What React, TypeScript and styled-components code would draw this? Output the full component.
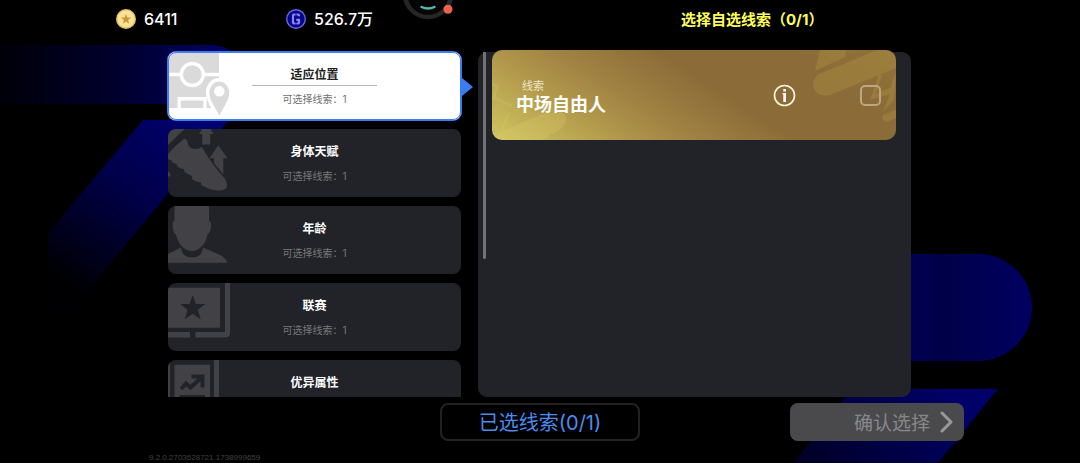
import React, { useState } from "react";
import styled, { createGlobalStyle, css } from "styled-components";

const GlobalStyle = createGlobalStyle`
  *, *::before, *::after { box-sizing: border-box; }
  body {
    margin: 0;
    background: #000;
    color: #fff;
    font-family: Inter, "Noto Sans CJK SC", sans-serif;
  }
  button { font: inherit; color: inherit; cursor: pointer; }
`;

const Page = styled.div`
  position: relative;
  display: flex;
  flex-direction: column;
  height: 100vh;
  padding: 0 116px;
  overflow: hidden;
  isolation: isolate;
`;

const Backdrop = styled.svg`
  position: absolute;
  inset: 0;
  z-index: -1;
  width: 100%;
  height: 100%;
`;

const Assistant = styled.svg`
  position: absolute;
  top: 0;
  left: 400px;
`;

const Header = styled.header`
  display: grid;
  grid-template-columns: 170fr 395fr 283fr;
  flex: none;
  height: 50px;
  padding-bottom: 12px;
  align-items: center;
`;

const Balance = styled.div`
  display: flex;
  align-items: center;
  gap: 8px;
  font-size: 16px;
  font-weight: 500;
  line-height: 20px;
`;

const PageTitle = styled.h1`
  margin: 2px 0 0;
  color: #ffff5a;
  font-size: 15px;
  font-weight: 700;
  line-height: 20px;
  white-space: nowrap;
`;

const Main = styled.main`
  display: grid;
  grid-template-columns: minmax(0, 306fr) minmax(0, 433fr);
  gap: 5px;
  flex: 1;
  min-height: 0;
  padding: 0 53px 0 51px;
`;

const CategoryList = styled.ul`
  display: flex;
  flex-direction: column;
  gap: 9px;
  margin: 0;
  padding: 2px 12px 0 1px;
  list-style: none;
  overflow-y: auto;
  scrollbar-width: none;
`;

const CategoryCard = styled.button<{ $active: boolean }>`
  position: relative;
  display: flex;
  flex-direction: column;
  align-items: center;
  width: 100%;
  height: 68px;
  padding: 14px 0 0;
  border: 0;
  border-radius: 8px;
  background: #222328;
  color: #fff;
  --icon: #424246;
  --card: #222328;

  ${(p) =>
    p.$active &&
    css`
      background: #fff;
      color: #222;
      box-shadow: 0 0 0 1px #3b7cf0;
      --icon: #dadada;
      --card: #fff;

      &::before {
        content: "";
        position: absolute;
        inset: 0;
        z-index: 1;
        border: 1px solid #3b7cf0;
        border-radius: 8px;
      }

      &::after {
        content: "";
        position: absolute;
        top: 26px;
        right: -12px;
        border-left: 11px solid #3b7cf0;
        border-top: 9px solid transparent;
        border-bottom: 9px solid transparent;
      }
    `}
`;

const CardArt = styled.svg`
  position: absolute;
  top: 0;
  left: 0;
  border-radius: 8px 0 0 8px;
`;

const CardName = styled.span`
  font-size: 12px;
  font-weight: 700;
  line-height: 18px;
`;

const CardRule = styled.span<{ $visible: boolean }>`
  width: 43%;
  height: 1px;
  margin: 1px 0 5px;
  background: ${(p) => (p.$visible ? "#b4b4b4" : "transparent")};
`;

const CardCount = styled.span<{ $active: boolean }>`
  color: ${(p) => (p.$active ? "#707070" : "#77787b")};
  font-size: 10px;
  line-height: 16px;
`;

const CluePanel = styled.section`
  display: flex;
  align-items: flex-start;
  gap: 6px;
  margin-top: 2px;
  padding: 0 15px 0 5px;
  border-radius: 9px;
  background: #222328;
`;

const ScrollThumb = styled.div`
  flex: none;
  width: 3px;
  height: 60%;
  border-radius: 0 0 2px 2px;
  background: #737376;
`;

const ClueCard = styled.div`
  position: relative;
  display: flex;
  flex: 1;
  align-items: center;
  height: 90px;
  margin-top: -2px;
  padding: 0 15px 0 24px;
  border-radius: 10px;
  overflow: hidden;
  isolation: isolate;
  background: linear-gradient(33deg, #d0c661 0%, #b0964a 25%, #a08343 37%, #8b6c38 56%, #8b6c38 80%, #92733a 100%);
`;

const ClueArt = styled.svg<{ $side: "left" | "right" }>`
  position: absolute;
  z-index: -1;
  top: 0;
  ${(p) => p.$side}: 0;
`;

const ClueText = styled.div`
  flex: 1;
  padding-top: 5px;
`;

const ClueKind = styled.div`
  padding-left: 6px;
  color: #efe6cc;
  font-size: 11px;
  line-height: 14px;
`;

const ClueName = styled.h2`
  margin: 0;
  font-size: 18px;
  font-weight: 700;
  line-height: 24px;
`;

const InfoButton = styled.button`
  display: flex;
  margin-right: 64px;
  padding: 0;
  border: 0;
  background: none;
`;

const ClueCheck = styled.input`
  appearance: none;
  width: 21px;
  height: 21px;
  margin: 0;
  border: 2px solid #b9a882;
  border-radius: 5px;
  cursor: pointer;

  &:checked { background: #fff; }
`;

const Footer = styled.footer`
  flex: none;
  padding-top: 6px;
`;

const Actions = styled.div`
  display: grid;
  grid-template-columns: 1fr 200px 1fr;
  height: 38px;
`;

const SelectedButton = styled.button`
  padding: 0 0 2px;
  border: 2px solid #222224;
  border-radius: 8px;
  background: #000;
  color: #4a8cf0;
  font-size: 20px;
`;

const ConfirmButton = styled.button`
  display: flex;
  align-items: center;
  justify-content: flex-end;
  justify-self: end;
  gap: 10px;
  width: 174px;
  padding: 0 11px 1px 0;
  border: 0;
  border-radius: 8px;
  background: #4a4a4d;
  color: #88888b;
  font-size: 19px;
`;

const Version = styled.div`
  padding: 12px 0 0 33px;
  color: #404040;
  font-family: "Liberation Sans", sans-serif;
  font-size: 8px;
  line-height: 10px;
`;

const PitchArt = () => (
  <>
    <path d="M0 0H51V56H0Z" fill="var(--icon)" />
    <path d="M0 22.5H51" stroke="var(--card)" strokeWidth="3.6" />
    <circle cx="24.3" cy="22.5" r="11" fill="var(--icon)" stroke="var(--card)" strokeWidth="3.4" />
    <path d="M11.2 56V46.8H37V56" fill="none" stroke="var(--card)" strokeWidth="3.4" />
    <path
      d="M51.3 63.8C48 56 41.4 49.5 41.4 40A9.9 10.4 0 0 1 61.2 40C61.2 49.5 54.6 56 51.3 63.8Z"
      fill="var(--icon)"
      stroke="var(--card)"
      strokeWidth="7"
      paintOrder="stroke"
    />
    <circle cx="51.3" cy="39.2" r="5.2" fill="var(--card)" />
  </>
);

const BootArt = () => (
  <g fill="var(--icon)">
    <path d="M0 0H17L10 6L0 16Z" />
    <path d="M16.500 9.500L19 11L20.500 16.500Q23 20 28 20Q31 20 33.500 18Q36 20 37 23.500L47 38Q52 44 57 50Q60.500 55 58 59.500Q55 62.500 46 61Q40 60 37.500 58L33.500 56.500L33 53.500L28 52.500L24.500 50.500L24 47L20.500 45.500L16.500 43L16 40L12.500 39.500L9.500 37.500L8.500 35L5 34L3.500 31.500L0 30V25L7.500 17Z" />
    <path d="M0 42L3 46L0 48Z" />
    <path d="M34 0H42.500L45.500 5H42.200V15.500H34.300V5H31Z" />
    <path d="M50.300 16.500L59.500 29.300H55.300V45.500L46 34V29.300H41.300Z" />
  </g>
);

const PersonArt = () => (
  <g fill="var(--icon)">
    <path d="M6.500 0H41L41 15Q43.500 15 43 21Q42 28 39.500 28.500C38 38 31 45 23.800 45C16.500 45 10 38 8 28.500Q5.500 28 4.800 21Q4.300 15 6.500 15Z" />
    <path d="M0 48L13 41.500Q14 51.500 24 51.500Q34 51.500 35 41.500L53 49.500Q58.500 53 59 56.700H0Z" />
  </g>
);

const LeagueArt = () => (
  <>
    <path d="M0 4.700H52V44.700H0Z" fill="var(--icon)" />
    <path
      d="M24.700 12L27.900 21H37.300L29.900 26.800L32.600 36.200L24.700 30.700L16.800 36.200L19.500 26.800L12.100 21H21.500Z"
      fill="var(--card)"
    />
    <path d="M57 0H62V50Q62 54.500 57.500 54.500H27.500V49H57ZM0 49H22V54.500H0Z" fill="var(--icon)" />
  </>
);

const AttributeArt = () => (
  <>
    <path d="M0 0H2V68H0ZM46 0H51V68H46ZM6.500 4.700H42V68H6.500Z" fill="var(--icon)" />
    <path d="M13 29L18 23.500L22.500 27.500L33.500 17.500M23.500 16.500H34.500V27.500" fill="none" stroke="var(--card)" strokeWidth="4" />
    <path d="M11.500 36.500H37" stroke="var(--card)" strokeWidth="3" />
  </>
);

const categories: { name: string; count?: number; Art: () => React.ReactElement }[] = [
  { name: "适应位置", count: 1, Art: PitchArt },
  { name: "身体天赋", count: 1, Art: BootArt },
  { name: "年龄", count: 1, Art: PersonArt },
  { name: "联赛", count: 1, Art: LeagueArt },
  { name: "优异属性", Art: AttributeArt },
];

const BackdropArt = () => (
  <Backdrop viewBox="0 0 1080 463" preserveAspectRatio="xMidYMid slice" aria-hidden="true">
    <defs>
      <linearGradient id="bar" x1="0" x2="1">
        <stop offset="0" stopColor="#000008" />
        <stop offset="0.5" stopColor="#000030" />
        <stop offset="1" stopColor="#000076" />
      </linearGradient>
      <linearGradient id="slash" gradientUnits="userSpaceOnUse" x1="190" y1="120" x2="72" y2="290">
        <stop offset="0" stopColor="#00006e" />
        <stop offset="0.45" stopColor="#000048" />
        <stop offset="1" stopColor="#000002" />
      </linearGradient>
      <linearGradient id="pill" gradientUnits="userSpaceOnUse" x1="911" y1="0" x2="1032" y2="0">
        <stop offset="0" stopColor="#000052" />
        <stop offset="0.25" stopColor="#000048" />
        <stop offset="1" stopColor="#000062" />
      </linearGradient>
      <linearGradient id="tail" gradientUnits="userSpaceOnUse" x1="810" y1="470" x2="930" y2="370">
        <stop offset="0" stopColor="#000026" />
        <stop offset="1" stopColor="#000068" />
      </linearGradient>
    </defs>
    <path d="M0 45H212Q250 48 256 104H0Z" fill="url(#bar)" />
    <path d="M143 120H229L70 312H48V233Z" fill="url(#slash)" />
    <path d="M880 254H978A54 53.500 0 0 1 978 361H880Z" fill="url(#pill)" />
    <path d="M852 389H998L938 463H793Z" fill="url(#tail)" />
  </Backdrop>
);

const CoinIcon = () => (
  <svg width="20" height="20" viewBox="0 0 20 20" aria-hidden="true">
    <circle cx="10" cy="10" r="10" fill="#e6bf5e" />
    <circle cx="10" cy="10" r="8.500" fill="#fbe29a" />
    <path d="M10 4.800L11.300 8.500H15.200L12.100 10.900L13.200 14.700L10 12.400L6.800 14.700L7.900 10.900L4.800 8.500H8.700Z" fill="#c9992f" />
  </svg>
);

const GemIcon = () => (
  <svg width="20" height="20" viewBox="0 0 20 20" aria-hidden="true">
    <circle cx="10" cy="10" r="9.300" fill="#05058c" stroke="#6a66e0" strokeWidth="1.400" />
    <path d="M13 7.300V6.500Q13 5.500 12 5.500H8Q7 5.500 7 6.500V13.500Q7 14.500 8 14.500H12Q13 14.500 13 13.500V10.800H10.300" fill="none" stroke="#8a86f4" strokeWidth="2.200" />
    <path d="M10 4V7M10 13V16" stroke="#05058c" strokeWidth="0.800" />
  </svg>
);

export default function App() {
  const [active, setActive] = useState(0);

  return (
    <Page>
      <GlobalStyle />
      <BackdropArt />
      <Header>
        <Balance><CoinIcon />6411</Balance>
        <Balance><GemIcon />526.7万</Balance>
        <PageTitle>选择自选线索（0/1）</PageTitle>
      </Header>
      <Assistant width="58" height="22" viewBox="0 0 58 22" aria-hidden="true">
        <circle cx="28" cy="-6" r="23" fill="#050505" stroke="#262626" strokeWidth="4.500" />
        <path d="M21.500 7Q28 10 34.500 7" fill="none" stroke="#55b8b0" strokeWidth="2.400" strokeLinecap="round" />
        <circle cx="48" cy="9.300" r="4.500" fill="#ee6350" />
      </Assistant>

      <Main>
        <CategoryList>
          {categories.map(({ name, count, Art }, i) => (
            <li key={name}>
              <CategoryCard type="button" $active={i === active} aria-pressed={i === active} onClick={() => setActive(i)}>
                <CardArt width="64" height="68" viewBox="0 0 64 68" aria-hidden="true"><Art /></CardArt>
                <CardName>{name}</CardName>
                <CardRule $visible={i === active} />
                {count !== undefined && <CardCount $active={i === active}>可选择线索：{count}</CardCount>}
              </CategoryCard>
            </li>
          ))}
        </CategoryList>

        <CluePanel>
          <ScrollThumb />
          <ClueCard>
            <ClueArt $side="left" width="90" height="90" viewBox="0 0 90 90" aria-hidden="true">
              <path d="M8 82L50 64L70 62Q76 66 73 74Q70 80 60 84L50 90H0Z" fill="#e0d070" opacity="0.240" />
              <path d="M0 34L5 36L2 48L20 56M17 63L10 80" fill="none" stroke="#e0d070" strokeWidth="3" opacity="0.180" />
            </ClueArt>
            <ClueArt $side="right" width="90" height="90" viewBox="0 0 90 90" aria-hidden="true">
              <g fill="#a68a40" opacity="0.500">
                <path d="M14 0H40L39 7L9 21Z" />
                <path d="M13 24L72 0H86L90 4V18L24 45Q10 48 7 36Q7 28 13 24Z" />
                <path d="M90 22L88 50L77 62L84 44L64 50L73 24L76 25L70 44L84 38Z" />
                <path d="M90 60V68L80 72Q75 70 77 65Z" />
              </g>
            </ClueArt>
            <ClueText>
              <ClueKind>线索</ClueKind>
              <ClueName>中场自由人</ClueName>
            </ClueText>
            <InfoButton type="button" aria-label="线索详情">
              <svg width="23" height="23" viewBox="0 0 23 23" aria-hidden="true">
                <circle cx="11.500" cy="11.500" r="10" fill="none" stroke="#fff6dc" strokeWidth="1.600" />
                <path d="M10.300 5H13V7.600H10.300ZM9.600 9H13V18H10.300V10.400H9.600Z" fill="#fff" />
              </svg>
            </InfoButton>
            <ClueCheck type="checkbox" aria-label="中场自由人" />
          </ClueCard>
        </CluePanel>
      </Main>

      <Footer>
        <Actions>
          <span />
          <SelectedButton type="button">已选线索(0/1)</SelectedButton>
          <ConfirmButton type="button">
            确认选择
            <svg width="13" height="22" viewBox="0 0 13 22" aria-hidden="true">
              <path d="M2 2L11 11L2 20" fill="none" stroke="#98989a" strokeWidth="3" strokeLinecap="round" strokeLinejoin="round" />
            </svg>
          </ConfirmButton>
        </Actions>
        <Version>9.2.0.2703628721.1738999659</Version>
      </Footer>
    </Page>
  );
}
